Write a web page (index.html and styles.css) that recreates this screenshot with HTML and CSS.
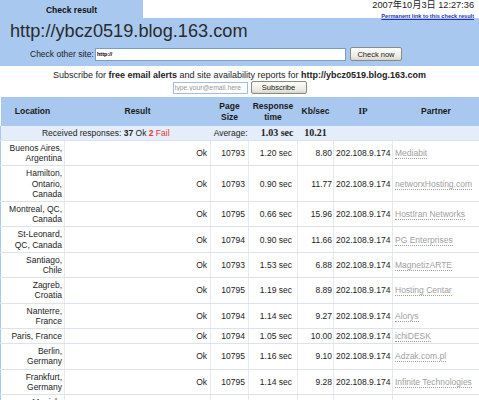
FILE: index.html
```html
<!DOCTYPE html>
<html>
<head>
<meta charset="utf-8">
<link rel="stylesheet" href="styles.css">
</head>
<body>
<div class="top">
  <div class="tab">Check result</div>
  <div class="stamp">
    <div class="date">2007年10月3日 12:27:36</div>
    <a class="perma" href="#">Permanent link to this check result</a>
  </div>
</div>
<div class="panel">
  <div class="title">http://ybcz0519.blog.163.com</div>
  <div class="check">
    <span class="label">Check other site:</span>
    <input class="site" type="text" value="http://">
    <button class="btn check-btn">Check now</button>
  </div>
</div>
<div class="subscribe">
  <p class="sub-text">Subscribe for <b>free email alerts</b> and site availability reports for <b>http://ybcz0519.blog.163.com</b></p>
  <div class="sub-form">
    <input class="email" type="text" placeholder="type.your@email.here">
    <button class="btn sub-btn">Subscribe</button>
  </div>
</div>
<table class="results">
  <colgroup>
    <col class="c-loc"><col class="c-res"><col class="c-size"><col class="c-time"><col class="c-kb"><col class="c-ip"><col class="c-partner">
  </colgroup>
  <thead>
    <tr>
      <th>Location</th><th>Result</th><th>Page<br>Size</th><th>Response<br>time</th><th>Kb/sec</th><th class="serif">IP</th><th>Partner</th>
    </tr>
  </thead>
  <tbody>
    <tr class="summary">
      <td colspan="2" class="s-recv">Received responses: <b>37</b> Ok <span class="fail"><b>2</b> Fail</span></td>
      <td class="s-avg">Average:</td>
      <td class="s-time">1.03 sec</td>
      <td class="s-kb">10.21</td>
      <td></td><td></td>
    </tr>
    <tr><td class="loc">Buenos Aires,<br>Argentina</td><td class="res">Ok</td><td class="size">10793</td><td class="time">1.20 sec</td><td class="kb">8.80</td><td class="ip">202.108.9.174</td><td class="partner"><a href="#">Mediabit</a></td></tr>
    <tr><td class="loc">Hamilton,<br>Ontario,<br>Canada</td><td class="res">Ok</td><td class="size">10793</td><td class="time">0.90 sec</td><td class="kb">11.77</td><td class="ip">202.108.9.174</td><td class="partner"><a href="#">networxHosting.com</a></td></tr>
    <tr><td class="loc">Montreal, QC,<br>Canada</td><td class="res">Ok</td><td class="size">10795</td><td class="time">0.66 sec</td><td class="kb">15.96</td><td class="ip">202.108.9.174</td><td class="partner"><a href="#">HostIran Networks</a></td></tr>
    <tr><td class="loc">St-Leonard,<br>QC, Canada</td><td class="res">Ok</td><td class="size">10794</td><td class="time">0.90 sec</td><td class="kb">11.66</td><td class="ip">202.108.9.174</td><td class="partner"><a href="#">PG Enterprises</a></td></tr>
    <tr><td class="loc">Santiago,<br>Chile</td><td class="res">Ok</td><td class="size">10793</td><td class="time">1.53 sec</td><td class="kb">6.88</td><td class="ip">202.108.9.174</td><td class="partner"><a href="#">MagnetizARTE</a></td></tr>
    <tr><td class="loc">Zagreb,<br>Croatia</td><td class="res">Ok</td><td class="size">10795</td><td class="time">1.19 sec</td><td class="kb">8.89</td><td class="ip">202.108.9.174</td><td class="partner"><a href="#">Hosting Centar</a></td></tr>
    <tr><td class="loc">Nanterre,<br>France</td><td class="res">Ok</td><td class="size">10794</td><td class="time">1.14 sec</td><td class="kb">9.27</td><td class="ip">202.108.9.174</td><td class="partner"><a href="#">Alorys</a></td></tr>
    <tr><td class="loc">Paris, France</td><td class="res">Ok</td><td class="size">10794</td><td class="time">1.05 sec</td><td class="kb">10.00</td><td class="ip">202.108.9.174</td><td class="partner"><a href="#">ichiDESK</a></td></tr>
    <tr><td class="loc">Berlin,<br>Germany</td><td class="res">Ok</td><td class="size">10795</td><td class="time">1.16 sec</td><td class="kb">9.10</td><td class="ip">202.108.9.174</td><td class="partner"><a href="#">Adzak.com.pl</a></td></tr>
    <tr><td class="loc">Frankfurt,<br>Germany</td><td class="res">Ok</td><td class="size">10795</td><td class="time">1.14 sec</td><td class="kb">9.28</td><td class="ip">202.108.9.174</td><td class="partner"><a href="#">Infinite Technologies</a></td></tr>
    <tr><td class="loc">Munich,<br>Germany</td><td class="res">Ok</td><td class="size">10795</td><td class="time">1.02 sec</td><td class="kb">10.35</td><td class="ip">202.108.9.174</td><td class="partner"><a href="#">Hetzner Online</a></td></tr>
  </tbody>
</table>
</body>
</html>
```
FILE: styles.css
```css
html, body {
  margin: 0;
  padding: 0;
  background: #ffffff;
}
body {
  font-family: "Liberation Sans", Arial, "Noto Sans CJK SC", sans-serif;
  font-size: 8.5px;
  color: #222;
  width: 479px;
}
.top {
  display: flex;
  height: 18px;
}
.tab {
  width: 143px;
  background: #a9c8ef;
  font-weight: bold;
  font-size: 8.5px;
  text-align: center;
  line-height: 20px;
  color: #111;
}
.stamp {
  flex: 1;
  text-align: right;
  padding-right: 5px;
}
.date {
  font-size: 9.2px;
  line-height: 9px;
  padding-top: 1px;
  color: #222;
}
.perma {
  display: inline-block;
  font-size: 5.6px;
  font-weight: bold;
  line-height: 8px;
  color: #1b33b8;
  text-decoration: underline;
}
.panel {
  background: #a9c8ef;
  padding: 2px 0 5px 0;
}
.title {
  font-size: 18.2px;
  line-height: 22px;
  padding-left: 10px;
  color: #2b2b2b;
}
.check {
  display: flex;
  align-items: center;
  margin-top: 5px;
  padding-left: 30px;
  height: 14px;
}
.label {
  font-size: 8.5px;
  width: 65px;
  color: #222;
}
.site {
  box-sizing: border-box;
  width: 251px;
  height: 13px;
  margin: 0;
  padding: 0 1px;
  border: 1px solid #7f9db9;
  font-family: "Liberation Sans", Arial, sans-serif;
  font-size: 5.5px;
  font-weight: bold;
  background: #fff;
  outline: none;
}
.btn {
  box-sizing: border-box;
  margin: 0;
  padding: 0;
  border: 1px solid #8a8a80;
  border-radius: 2px;
  background: linear-gradient(#fdfdfb, #ecebe4 70%, #d8d6cc);
  font-family: "Liberation Sans", Arial, sans-serif;
  font-size: 7.5px;
  color: #222;
}
.check-btn {
  width: 52px;
  height: 14px;
  margin-left: 4px;
}
.subscribe {
  padding: 4px 0 3px 0;
  text-align: center;
}
.sub-text {
  margin: 0;
  font-size: 9px;
  line-height: 10px;
  color: #222;
}
.sub-form {
  display: flex;
  justify-content: center;
  align-items: center;
  gap: 3px;
  margin-top: 1px;
  height: 13px;
}
.email {
  box-sizing: border-box;
  width: 75px;
  height: 12px;
  margin: 0;
  padding: 0 1px;
  border: 1px solid #a7bdd3;
  font-family: "Liberation Sans", Arial, sans-serif;
  font-size: 6.8px;
  outline: none;
}
.email::placeholder {
  color: #9a9a9a;
}
.sub-btn {
  width: 56px;
  height: 13px;
}
.results {
  border-collapse: collapse;
  table-layout: fixed;
  width: 479px;
}
.c-loc { width: 64px; }
.c-res { width: 146px; }
.c-size { width: 38px; }
.c-time { width: 49px; }
.c-kb { width: 36px; }
.c-ip { width: 59px; }
.c-partner { width: 87px; }
.results th {
  background: #a9c8ef;
  height: 29px;
  padding: 0;
  font-size: 8.5px;
  line-height: 11px;
  font-weight: bold;
  color: #1a1a1a;
  text-align: center;
  white-space: nowrap;
}
.results th.serif {
  font-family: "Liberation Serif", "Times New Roman", serif;
  font-size: 9px;
}
.results td {
  padding: 2px 0;
  line-height: 10.2px;
  font-size: 8.5px;
  color: #222;
  border-bottom: 1px solid #dde3ec;
  border-left: 1px solid #e6eaf0;
  white-space: nowrap;
  vertical-align: middle;
}
.results td:first-child {
  border-left: 1px solid #a9c8ef;
}
.summary td {
  background: #e4edf9;
  border-left: none;
  border-bottom: 1px solid #dde3ec;
  height: 9px;
  line-height: 10px;
}
.summary td:first-child {
  border-left: 1px solid #a9c8ef;
}
.s-recv {
  text-align: center;
}
.fail {
  color: #e8352f;
}
.s-avg {
  text-align: right;
  padding-right: 1px !important;
}
.s-time {
  text-align: right;
  padding-right: 4px !important;
  font-family: "Liberation Serif", "Times New Roman", serif;
  font-weight: bold;
  font-size: 10px !important;
}
.s-kb {
  text-align: center;
  font-family: "Liberation Serif", "Times New Roman", serif;
  font-weight: bold;
  font-size: 10px !important;
}
.loc {
  text-align: right;
  padding-right: 2px !important;
}
.res {
  text-align: right;
  padding-right: 3px !important;
}
.size {
  text-align: right;
  padding-right: 3px !important;
}
.time {
  text-align: right;
  padding-right: 5px !important;
}
.kb {
  text-align: right;
  padding-right: 1px !important;
}
.ip {
  padding-left: 2px !important;
}
.partner {
  padding-left: 2px !important;
  overflow: hidden;
}
.partner a {
  color: #a0a0a0;
  text-decoration: none;
  border-bottom: 1px dotted #a0a0a0;
}
```
